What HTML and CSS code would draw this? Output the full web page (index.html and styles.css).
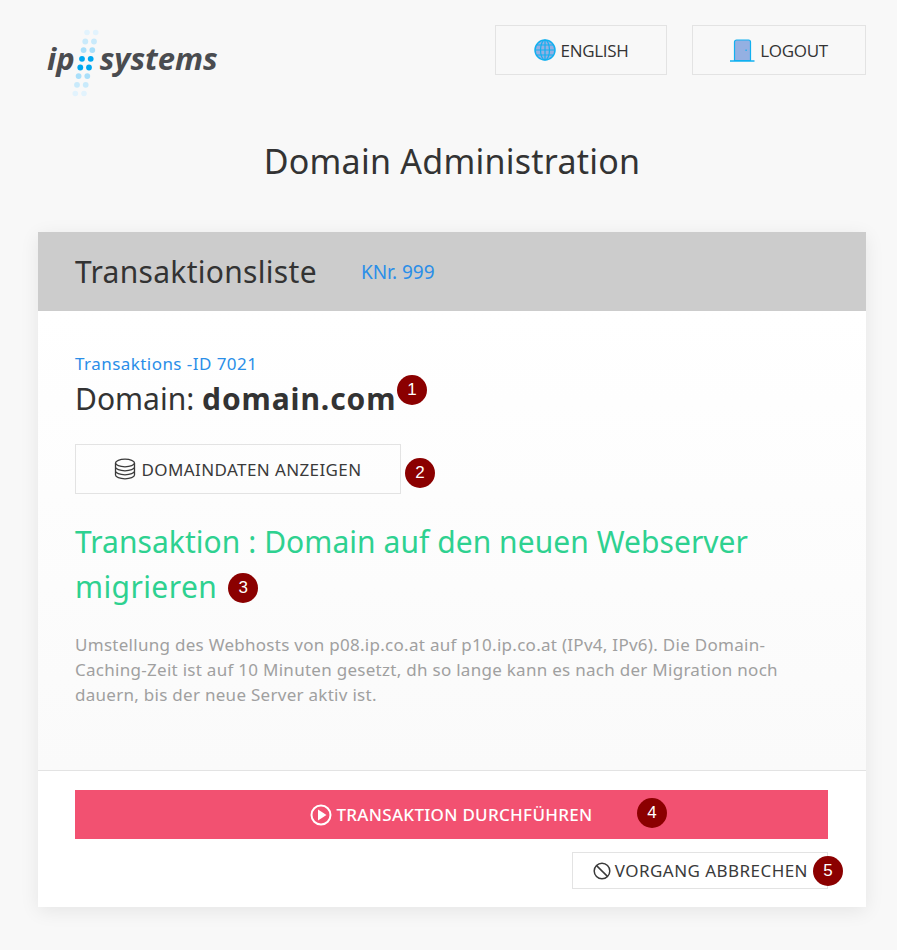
FILE: index.html
```html
<!DOCTYPE html>
<html lang="de">
<head>
<meta charset="utf-8">
<title>Domain Administration</title>
<link rel="stylesheet" href="styles.css">
</head>
<body>
<header class="top">
  <div class="logo">
    <svg class="logo-dots" width="40" height="70" viewBox="0 0 40 70">
      <g fill="#e2f3fd"><circle cx="16" cy="3.500" r="2.800"/><circle cx="24.700" cy="3.500" r="2.800"/></g>
      <g fill="#c9eafb"><circle cx="14.300" cy="12.500" r="2.900"/><circle cx="23" cy="12.500" r="2.900"/></g>
      <g fill="#a9dffa"><circle cx="12.600" cy="21.100" r="2.900"/><circle cx="21.300" cy="21.100" r="2.900"/></g>
      <g fill="#00a8f0"><circle cx="11" cy="29.800" r="2.900"/><circle cx="19.700" cy="29.800" r="2.900"/><circle cx="9.300" cy="38.500" r="2.900"/><circle cx="18" cy="38.500" r="2.900"/></g>
      <g fill="#a9dffa"><circle cx="7.600" cy="47.100" r="2.900"/><circle cx="16.300" cy="47.100" r="2.900"/></g>
      <g fill="#c9eafb"><circle cx="6" cy="55.800" r="2.900"/><circle cx="14.700" cy="55.800" r="2.900"/></g>
      <g fill="#e2f3fd"><circle cx="4.300" cy="64.500" r="2.800"/><circle cx="13" cy="64.500" r="2.800"/></g>
    </svg>
    <span class="logo-ip">ip</span><span class="logo-sys">systems</span>
  </div>
  <nav class="top-nav">
    <a class="top-btn top-btn-lang">
      <svg width="22" height="22" viewBox="0 0 22 22"><circle cx="11" cy="11" r="10" fill="#94b0e2" stroke="#12b0f0" stroke-width="1.500"/><ellipse cx="11" cy="11" rx="4.500" ry="10" fill="none" stroke="#12b0f0" stroke-width="1.200"/><path d="M11 1v20M1 11h20M2.500 6h17M2.500 16h17" fill="none" stroke="#12b0f0" stroke-width="1.200"/></svg>
      ENGLISH
    </a>
    <a class="top-btn top-btn-out">
      <svg width="25" height="23" viewBox="0 0 25 23"><path d="M4.500 21.500V3a2 2 0 0 1 2-2h12a2 2 0 0 1 2 2v18.500z" fill="#94b0e2" stroke="#12b0f0" stroke-width="1.200"/><path d="M0 22h24.500" stroke="#12b0f0" stroke-width="1.500"/><rect x="15.500" y="10.500" width="1.200" height="1.500" fill="#12b0f0"/></svg>
      LOGOUT
    </a>
  </nav>
</header>
<h1 class="page-title">Domain Administration</h1>
<main class="card">
  <div class="card-head">
    <h2 class="card-title">Transaktionsliste</h2>
    <span class="knr">KNr. 999</span>
  </div>
  <div class="card-body">
    <div class="tx-id">Transaktions -ID 7021</div>
    <div class="domain">Domain: <b>domain.com</b><span class="badge badge-1">1</span></div>
    <div class="data-row">
      <a class="data-btn">
        <svg width="22" height="22" viewBox="0 0 22 22" fill="none" stroke="#3a3a3a" stroke-width="1.300"><ellipse cx="11" cy="5" rx="9.500" ry="3.800"/><path d="M1.500 5v12c0 2.100 4.300 3.800 9.500 3.800s9.500-1.700 9.500-3.800V5M1.500 9c0 2.100 4.300 3.800 9.500 3.800s9.500-1.700 9.500-3.800M1.500 13c0 2.100 4.300 3.800 9.500 3.800s9.500-1.700 9.500-3.800"/></svg>
        DOMAINDATEN ANZEIGEN
      </a>
      <span class="badge badge-2">2</span>
    </div>
    <h3 class="tx-title">Transaktion : Domain auf den neuen Webserver <span class="last-word">migrieren</span><span class="badge badge-3">3</span></h3>
    <p class="tx-desc">Umstellung des Webhosts von p08.ip.co.at auf p10.ip.co.at (IPv4, IPv6). Die Domain-Caching-Zeit ist auf 10 Minuten gesetzt, dh so lange kann es nach der Migration noch dauern, bis der neue Server aktiv ist.</p>
  </div>
  <div class="card-foot">
    <a class="run-btn">
      <svg width="22" height="22" viewBox="0 0 22 22"><circle cx="11" cy="11" r="9.500" fill="none" stroke="#fff" stroke-width="2"/><path d="M8 5.500l8.500 5.500-8.500 5.500z" fill="#fff"/></svg>
      TRANSAKTION DURCHFÜHREN
      <span class="badge badge-4">4</span>
    </a>
    <div class="cancel-row">
      <a class="cancel-btn">
        <svg width="18" height="18" viewBox="0 0 18 18" fill="none" stroke="#3a3a3a" stroke-width="1.500"><circle cx="9" cy="9" r="7.800"/><path d="M3.600 3.600l10.800 10.800"/></svg>
        VORGANG ABBRECHEN
        <span class="badge badge-5">5</span>
      </a>
    </div>
  </div>
</main>
</body>
</html>
```

FILE: styles.css
```css
* { box-sizing: border-box; }
html, body { margin: 0; padding: 0; }
body {
  background: #f8f8f8;
  color: #333;
  font-family: "Noto Sans", "Liberation Sans", sans-serif;
  height: 950px;
  overflow: hidden;
  padding: 25px 31px 0 38px;
}
.top { display: flex; justify-content: space-between; height: 50px; }
.logo {
  position: relative;
  width: 190px;
  padding: 13px 0 0 9px;
  color: #4a4c50;
  font-family: "Open Sans", sans-serif;
  font-style: italic;
  font-weight: 700;
  font-size: 31px;
  line-height: 40px;
  letter-spacing: 0;
}
.logo-dots { position: absolute; left: 33px; top: 4px; }
.logo-sys { margin-left: 25px; }
.top-nav { display: flex; gap: 25px; }
.top-btn {
  display: flex; align-items: center; justify-content: center; gap: 5px;
  height: 50px;
  border: 1px solid #e3e3e3;
  font-family: "Open Sans", sans-serif;
  font-size: 17px;
  letter-spacing: -0.3px;
  color: #333;
}
.top-btn-lang { width: 172px; }
.top-btn-out { width: 174px; }
.page-title {
  margin: 61px 0 0;
  text-align: center;
  font-size: 34px;
  line-height: 50px;
  font-weight: 400;
  letter-spacing: 0.25px;
  color: #333;
  height: 96px;
}
.card {
  width: 828px;
  height: 675px;
  background: #fff;
  box-shadow: 0 4px 18px rgba(0,0,0,0.08);
  display: flex; flex-direction: column;
}
.card-head {
  height: 79px;
  background: #ccc;
  display: flex; align-items: center; gap: 44px;
  padding: 0 37px;
}
.card-title { margin: 0; font-size: 30px; font-weight: 400; letter-spacing: 0.3px; color: #333; }
.knr { font-size: 19px; color: #2a8ee8; }
.card-body {
  height: 460px;
  padding: 40px 37px 0;
  background: linear-gradient(#fff, #fafafa);
  border-bottom: 1px solid #e3e3e3;
}
.tx-id { font-size: 17px; line-height: 26px; letter-spacing: 0.45px; color: #2a8ee8; }
.domain { position: relative; font-size: 30px; line-height: 44px; color: #333; }
.domain b { font-weight: 700; letter-spacing: 0.9px; }
.data-row { position: relative; margin-top: 23px; }
.data-btn {
  display: flex; align-items: center; justify-content: center; gap: 5px;
  width: 326px; height: 50px;
  border: 1px solid #e3e3e3;
  font-size: 17px; letter-spacing: 0.4px; color: #3a3a3a;
}
.tx-title {
  margin: 25px 0 0;
  font-size: 30px;
  font-weight: 400;
  line-height: 45px;
  letter-spacing: 0.05px;
  color: #2ed190;
  width: 740px;
}
.last-word { letter-spacing: 0.4px; }
.tx-desc {
  margin: 23px 0 0;
  width: 710px;
  font-size: 17px;
  line-height: 25px;
  letter-spacing: 0.28px;
  color: #a0a0a0;
}
.card-foot { padding: 19px 38px 0 37px; }
.run-btn {
  position: relative;
  display: flex; align-items: center; justify-content: center; gap: 4px;
  height: 49px;
  background: #f25171;
  color: #fff;
  font-size: 17px;
  font-weight: 500;
  letter-spacing: 0.3px;
}
.cancel-row { display: flex; justify-content: flex-end; margin-top: 13px; }
.cancel-btn {
  position: relative;
  display: flex; align-items: center; justify-content: flex-end; gap: 4px;
  width: 256px; height: 37px;
  padding-right: 19px;
  border: 1px solid #e3e3e3;
  font-size: 17px; letter-spacing: 0.45px; color: #3a3a3a;
}
.badge {
  position: absolute;
  width: 30px; height: 30px;
  border-radius: 50%;
  background: #8b0000;
  color: #fff;
  font-family: "Liberation Sans", sans-serif;
  font-size: 17px;
  font-weight: 400;
  line-height: 30px;
  letter-spacing: 0;
  text-align: center;
}
.badge-1 { left: 322px; top: -2px; }
.badge-2 { left: 330px; top: 14px; }
.badge.badge-3 { position: static; display: inline-block; margin-left: 11px; vertical-align: 5px; }
.badge-4 { left: 562px; top: 8px; }
.badge-5 { left: 240px; top: 3px; }
```
